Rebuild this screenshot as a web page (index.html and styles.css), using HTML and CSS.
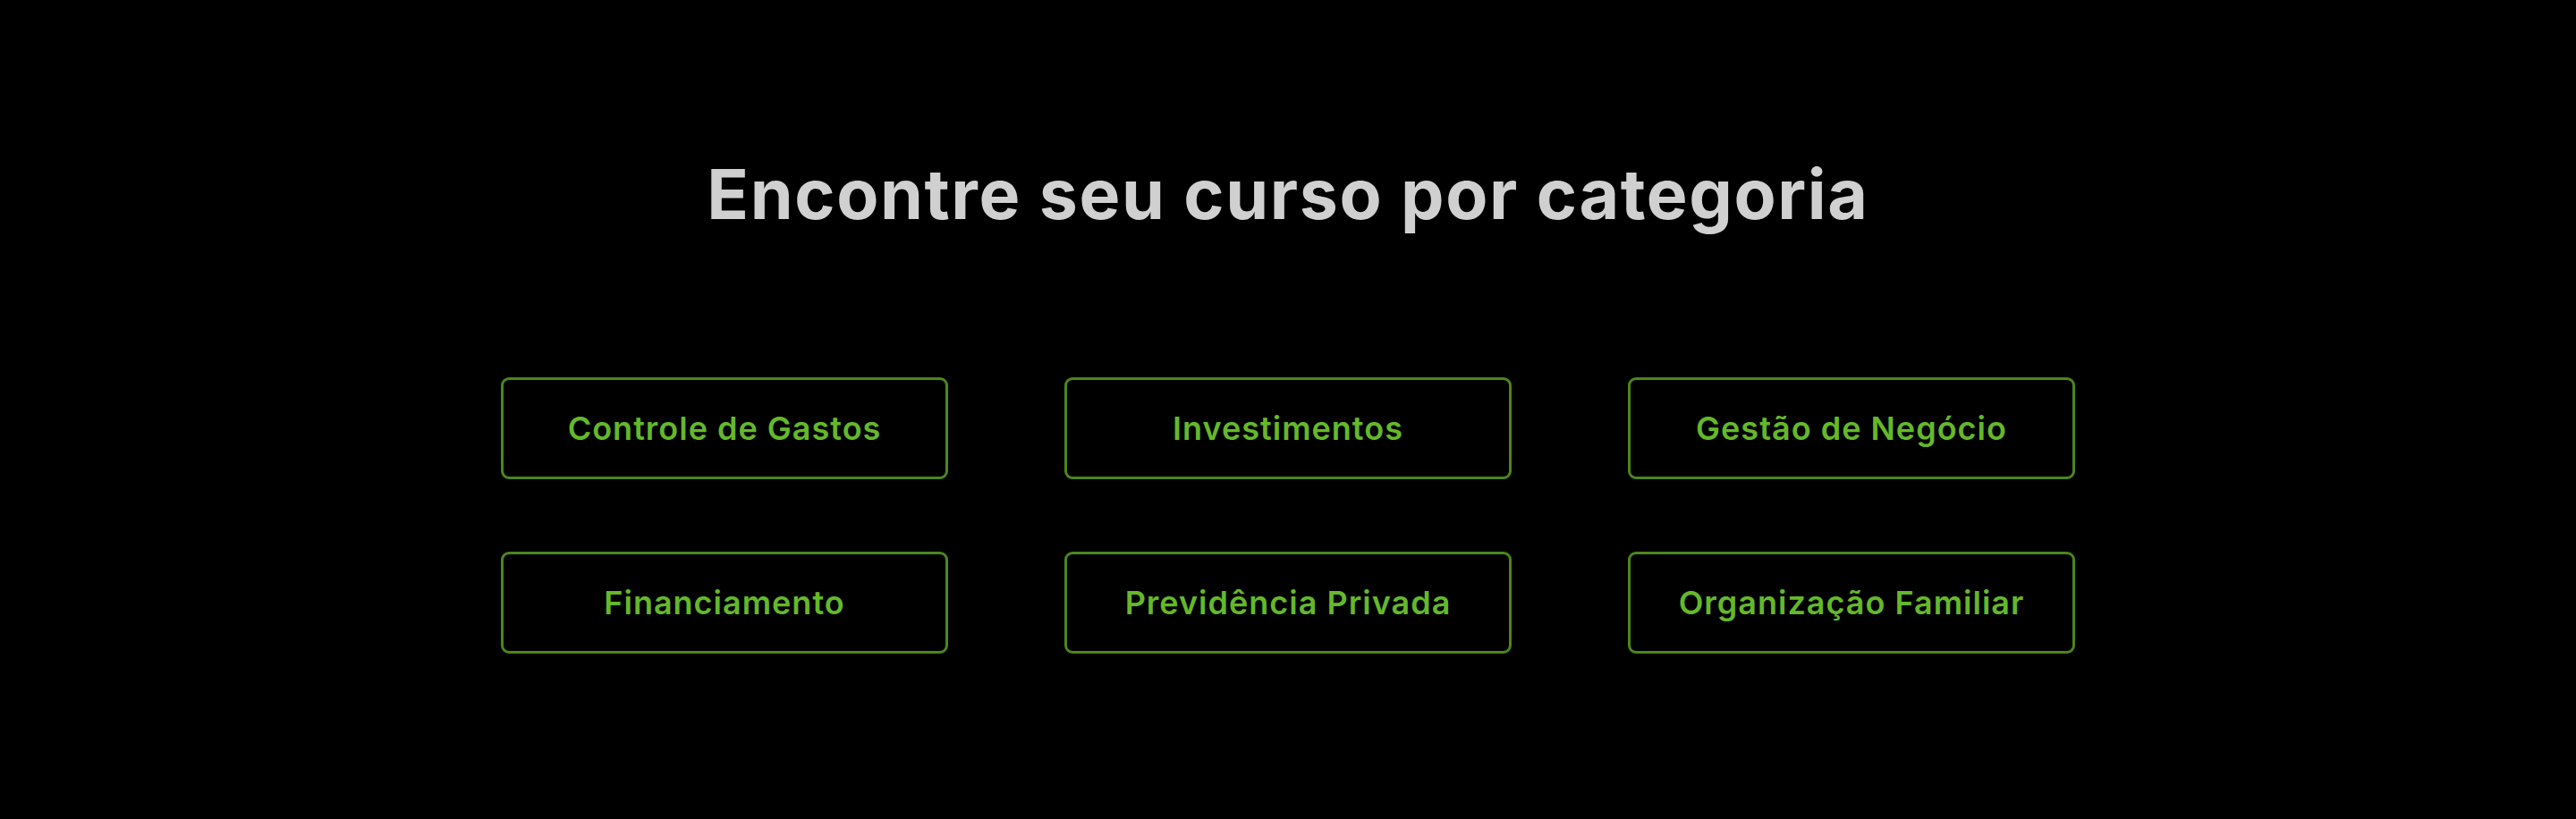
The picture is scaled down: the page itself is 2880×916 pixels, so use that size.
FILE: index.html
```html
<!DOCTYPE html>
<html lang="pt-BR">
<head>
<meta charset="utf-8">
<title>Categorias</title>
<link rel="stylesheet" href="styles.css">
</head>
<body>
<section class="categories">
  <h2 class="categories__title">Encontre seu curso por categoria</h2>
  <div class="categories__grid">
    <a class="category" href="#">Controle de Gastos</a>
    <a class="category" href="#">Investimentos</a>
    <a class="category" href="#">Gestão de Negócio</a>
    <a class="category" href="#">Financiamento</a>
    <a class="category" href="#">Previdência Privada</a>
    <a class="category" href="#">Organização Familiar</a>
  </div>
</section>
</body>
</html>
```

FILE: styles.css
```css
html, body {
  margin: 0;
  padding: 0;
  background: #000;
}

body {
  font-family: Inter, "Noto Sans", "Liberation Sans", sans-serif;
  height: 916px;
  overflow: hidden;
}

.categories {
  display: flex;
  flex-direction: column;
  align-items: center;
  padding-top: 171px;
}

.categories__title {
  margin: 0;
  font-size: 77px;
  font-weight: 700;
  line-height: 92px;
  color: #d0d0d0;
  letter-spacing: 1.6px;
}

.categories__grid {
  display: grid;
  grid-template-columns: repeat(3, 500px);
  grid-auto-rows: 114px;
  column-gap: 130px;
  row-gap: 81px;
  margin-top: 159px;
}

.category {
  display: flex;
  align-items: center;
  justify-content: center;
  border: 3px solid #4c861d;
  border-radius: 9px;
  color: #64b82a;
  font-size: 36px;
  font-weight: 600;
  text-decoration: none;
  letter-spacing: 1px;
}
```
